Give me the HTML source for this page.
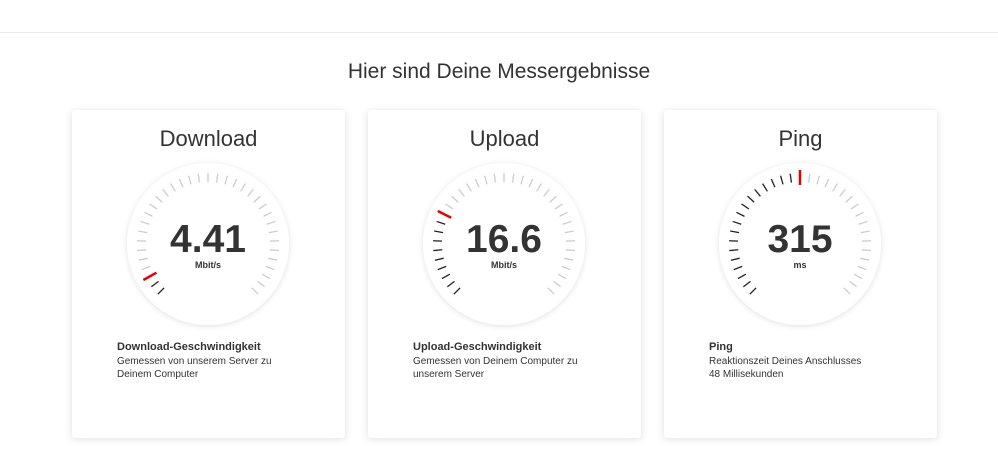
<!DOCTYPE html>
<html><head><meta charset="utf-8"><style>
body{margin:0;width:998px;height:465px;background:#fff;font-family:"Liberation Sans",sans-serif;position:relative;overflow:hidden;color:#333}
.line{position:absolute;top:32px;left:0;width:998px;height:1px;background:#ececec}
h1{position:absolute;top:60px;left:0;width:998px;text-align:center;margin:0;font-weight:normal;font-size:21px;color:#333}
.card{position:absolute;top:110px;width:273px;height:328px;background:#fff;box-shadow:0 1px 8px rgba(0,0,0,.13);border-radius:3px}
.card h2{position:absolute;top:16px;left:0;width:100%;text-align:center;margin:0;font-weight:normal;font-size:22px;color:#333}
.card svg{position:absolute;left:50px;top:48px}
.desc{position:absolute;left:45px;top:231px;font-size:10px;line-height:13px;color:#333}
.desc b{font-size:11px;display:block;margin-bottom:1px}
</style></head><body>
<div class="line"></div>
<h1>Hier sind Deine Messergebnisse</h1>
<div class="card" style="left:72px"><h2>Download</h2><svg width="172" height="172" data-r="2" data-v="4.41" data-u="Mbit/s"></svg>
<div class="desc"><b>Download-Geschwindigkeit</b>Gemessen von unserem Server zu<br>Deinem Computer</div></div>
<div class="card" style="left:368px"><h2>Upload</h2><svg width="172" height="172" data-r="9" data-v="16.6" data-u="Mbit/s"></svg>
<div class="desc"><b>Upload-Geschwindigkeit</b>Gemessen von Deinem Computer zu<br>unserem Server</div></div>
<div class="card" style="left:664px"><h2>Ping</h2><svg width="172" height="172" data-r="17" data-v="315" data-u="ms"></svg>
<div class="desc"><b>Ping</b>Reaktionszeit Deines Anschlusses<br>48 Millisekunden</div></div>
<script>
document.querySelectorAll('svg').forEach(s=>{
 var r=+s.dataset.r,c=86,h='<defs><filter id="f" x="-20%" y="-20%" width="140%" height="140%"><feDropShadow dx="0" dy="1" stdDeviation="3" flood-opacity="0.12"/></filter></defs><circle cx="86" cy="86" r="81" fill="#fff" filter="url(#f)"/>';
 var n=35,st=270/(n-1);
 for(var i=0;i<n;i++){var a=(-135+i*st)*Math.PI/180,col=i<r?'#222':i==r?'#e60000':'#ccc',r1=i==r?59:62,r2=i==r?74:71,w=i==r?2.5:1.3;
  h+='<line x1="'+(c+r1*Math.sin(a))+'" y1="'+(c-r1*Math.cos(a))+'" x2="'+(c+r2*Math.sin(a))+'" y2="'+(c-r2*Math.cos(a))+'" stroke="'+col+'" stroke-width="'+w+'"/>';}
 h+='<text x="86" y="94" text-anchor="middle" font-family="Liberation Sans" font-weight="bold" font-size="39" fill="#333">'+s.dataset.v+'</text>';
 h+='<text x="86" y="110" text-anchor="middle" font-family="Liberation Sans" font-weight="bold" font-size="9" fill="#333">'+s.dataset.u+'</text>';
 s.innerHTML=h;});
</script>
</body></html>
